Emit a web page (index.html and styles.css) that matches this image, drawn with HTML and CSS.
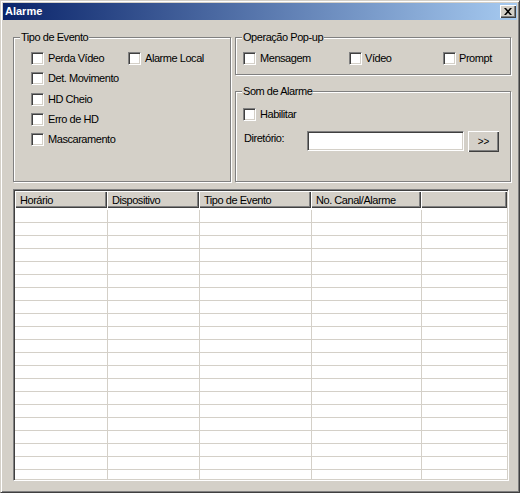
FILE: index.html
```html
<!DOCTYPE html>
<html lang="pt">
<head>
<meta charset="utf-8">
<title>Alarme</title>
<link rel="stylesheet" href="styles.css">
</head>
<body>
<div class="window">
  <div class="titlebar">
    <span class="title">Alarme</span>
    <span class="close-btn">
      <svg width="8" height="7" viewBox="0 0 8 7"><path d="M0 0h2l2 2.3 2-2.3h2l-3 3.5 3 3.5h-2l-2-2.3-2 2.3h-2l3-3.5z" fill="#000"/></svg>
    </span>
  </div>
  <div class="content">
    <div class="top">
      <div class="group g-tipo">
        <span class="legend">Tipo de Evento</span>
        <div class="tipo-cols">
          <div class="tipo-col c1">
            <label class="chk"><span class="box"></span><span class="txt">Perda Vídeo</span></label>
            <label class="chk"><span class="box"></span><span class="txt">Det. Movimento</span></label>
            <label class="chk"><span class="box"></span><span class="txt">HD Cheio</span></label>
            <label class="chk"><span class="box"></span><span class="txt">Erro de HD</span></label>
            <label class="chk"><span class="box"></span><span class="txt">Mascaramento</span></label>
          </div>
          <div class="tipo-col">
            <label class="chk"><span class="box"></span><span class="txt">Alarme Local</span></label>
          </div>
        </div>
      </div>
      <div class="right-col">
        <div class="group g-popup">
          <span class="legend">Operação Pop-up</span>
          <div class="popup-row">
            <label class="chk p1"><span class="box"></span><span class="txt">Mensagem</span></label>
            <label class="chk p2"><span class="box"></span><span class="txt">Vídeo</span></label>
            <label class="chk p3"><span class="box"></span><span class="txt">Prompt</span></label>
          </div>
        </div>
        <div class="group g-som">
          <span class="legend">Som de Alarme</span>
          <label class="chk"><span class="box"></span><span class="txt">Habilitar</span></label>
          <div class="dir-row">
            <span class="dir-label">Diretório:</span>
            <span class="input"></span>
            <span class="btn">&gt;&gt;</span>
          </div>
        </div>
      </div>
    </div>
    <div class="list">
      <div class="lv-header">
        <div class="hcell w1">Horário</div>
        <div class="hcell w2">Dispositivo</div>
        <div class="hcell w3">Tipo de Evento</div>
        <div class="hcell w4">No. Canal/Alarme</div>
        <div class="hcell w5"></div>
      </div>
      <div class="lv-body">
        <div class="row"><div class="cell w1"></div><div class="cell w2"></div><div class="cell w3"></div><div class="cell w4"></div><div class="cell w5"></div></div>
        <div class="row"><div class="cell w1"></div><div class="cell w2"></div><div class="cell w3"></div><div class="cell w4"></div><div class="cell w5"></div></div>
        <div class="row"><div class="cell w1"></div><div class="cell w2"></div><div class="cell w3"></div><div class="cell w4"></div><div class="cell w5"></div></div>
        <div class="row"><div class="cell w1"></div><div class="cell w2"></div><div class="cell w3"></div><div class="cell w4"></div><div class="cell w5"></div></div>
        <div class="row"><div class="cell w1"></div><div class="cell w2"></div><div class="cell w3"></div><div class="cell w4"></div><div class="cell w5"></div></div>
        <div class="row"><div class="cell w1"></div><div class="cell w2"></div><div class="cell w3"></div><div class="cell w4"></div><div class="cell w5"></div></div>
        <div class="row"><div class="cell w1"></div><div class="cell w2"></div><div class="cell w3"></div><div class="cell w4"></div><div class="cell w5"></div></div>
        <div class="row"><div class="cell w1"></div><div class="cell w2"></div><div class="cell w3"></div><div class="cell w4"></div><div class="cell w5"></div></div>
        <div class="row"><div class="cell w1"></div><div class="cell w2"></div><div class="cell w3"></div><div class="cell w4"></div><div class="cell w5"></div></div>
        <div class="row"><div class="cell w1"></div><div class="cell w2"></div><div class="cell w3"></div><div class="cell w4"></div><div class="cell w5"></div></div>
        <div class="row"><div class="cell w1"></div><div class="cell w2"></div><div class="cell w3"></div><div class="cell w4"></div><div class="cell w5"></div></div>
        <div class="row"><div class="cell w1"></div><div class="cell w2"></div><div class="cell w3"></div><div class="cell w4"></div><div class="cell w5"></div></div>
        <div class="row"><div class="cell w1"></div><div class="cell w2"></div><div class="cell w3"></div><div class="cell w4"></div><div class="cell w5"></div></div>
        <div class="row"><div class="cell w1"></div><div class="cell w2"></div><div class="cell w3"></div><div class="cell w4"></div><div class="cell w5"></div></div>
        <div class="row"><div class="cell w1"></div><div class="cell w2"></div><div class="cell w3"></div><div class="cell w4"></div><div class="cell w5"></div></div>
        <div class="row"><div class="cell w1"></div><div class="cell w2"></div><div class="cell w3"></div><div class="cell w4"></div><div class="cell w5"></div></div>
        <div class="row"><div class="cell w1"></div><div class="cell w2"></div><div class="cell w3"></div><div class="cell w4"></div><div class="cell w5"></div></div>
        <div class="row"><div class="cell w1"></div><div class="cell w2"></div><div class="cell w3"></div><div class="cell w4"></div><div class="cell w5"></div></div>
        <div class="row"><div class="cell w1"></div><div class="cell w2"></div><div class="cell w3"></div><div class="cell w4"></div><div class="cell w5"></div></div>
        <div class="row"><div class="cell w1"></div><div class="cell w2"></div><div class="cell w3"></div><div class="cell w4"></div><div class="cell w5"></div></div>
        <div class="row"><div class="cell w1"></div><div class="cell w2"></div><div class="cell w3"></div><div class="cell w4"></div><div class="cell w5"></div></div>
      </div>
    </div>
  </div>
</div>
</body>
</html>
```

FILE: styles.css
```css
* { box-sizing: border-box; }
html, body { margin: 0; padding: 0; }
body {
  width: 520px;
  height: 493px;
  overflow: hidden;
  background: #d4d0c8;
  font-family: "Liberation Sans", Arial, sans-serif;
  font-size: 11px;
  letter-spacing: -0.45px;
  color: #000;
}
.window {
  width: 520px;
  height: 493px;
  background: #d4d0c8;
  border: 1px solid;
  border-color: #d4d0c8 #404040 #404040 #d4d0c8;
  box-shadow: inset 1px 1px #fff, inset -1px -1px #808080;
  padding: 2px;
  display: flex;
  flex-direction: column;
}
.titlebar {
  height: 17px;
  flex: none;
  display: flex;
  align-items: center;
  padding-left: 2px;
  background: linear-gradient(to right, #0a246a, #a6caf0);
}
.title {
  color: #fff;
  font-weight: bold;
  letter-spacing: 0;
  line-height: 13px;
}
.close-btn {
  margin-left: auto;
  margin-right: 1px;
  width: 16px;
  height: 13px;
  background: #d4d0c8;
  box-shadow: inset 1px 1px #fff, inset -1px -1px #404040, inset -2px -2px #808080;
  display: flex;
  align-items: center;
  justify-content: center;
  padding-right: 1px;
}
.close-btn svg { display: block; }
.content {
  padding: 17px 0 0 10px;
}
.top {
  display: flex;
  gap: 4px;
  height: 145px;
}
.group {
  position: relative;
  border: 1px solid #808080;
  box-shadow: inset 1px 1px #fff, 1px 1px #fff;
}
.legend {
  position: absolute;
  top: -7px;
  left: 6px;
  padding: 0 1px;
  background: #d4d0c8;
  line-height: 13px;
  white-space: nowrap;
}
.g-tipo {
  width: 218px;
  height: 145px;
  padding: 14px 0 0 17px;
}
.tipo-cols { display: flex; }
.tipo-col {
  display: flex;
  flex-direction: column;
  gap: 7.25px;
}
.tipo-col.c1 { width: 97px; }
.chk {
  display: flex;
  align-items: center;
  gap: 4px;
  height: 13px;
  white-space: nowrap;
}
.box {
  flex: none;
  width: 13px;
  height: 13px;
  background: #fff;
  border: 1px solid;
  border-color: #808080 #fff #fff #808080;
  box-shadow: inset 1px 1px #404040, inset -1px -1px #d4d0c8;
}
.txt { line-height: 13px; }
.right-col {
  width: 276px;
  display: flex;
  flex-direction: column;
  gap: 16px;
}
.g-popup {
  height: 38px;
  padding: 14px 0 0 7px;
}
.popup-row { display: flex; }
.p1 { width: 106px; }
.p2 { width: 94px; }
.p2 .txt, .p3 .txt { margin-left: -1px; }
.g-som {
  height: 91px;
  padding: 16px 0 0 7px;
}
.dir-row {
  display: flex;
  align-items: flex-start;
  margin-top: 10px;
}
.dir-label {
  width: 64px;
  padding-left: 1px;
  line-height: 13px;
  margin-top: 1px;
}
.input {
  width: 157px;
  height: 20px;
  background: #fff;
  border: 1px solid;
  border-color: #808080 #fff #fff #808080;
  box-shadow: inset 1px 1px #404040, inset -1px -1px #d4d0c8;
}
.btn {
  margin-left: 4px;
  width: 31px;
  height: 21px;
  background: #d4d0c8;
  box-shadow: inset 1px 1px #fff, inset -1px -1px #404040, inset -2px -2px #808080;
  display: flex;
  align-items: center;
  justify-content: center;
  font-size: 10px;
  letter-spacing: 0;
  line-height: 13px;
}
.list {
  margin-top: 7px;
  width: 496px;
  height: 292px;
  background: #fff;
  border: 1px solid;
  border-color: #808080 #fff #fff #808080;
  box-shadow: inset 1px 1px #404040, inset -1px -1px #d4d0c8;
  padding: 1px;
  overflow: hidden;
  display: flex;
  flex-direction: column;
}
.lv-header {
  display: flex;
  height: 17px;
  flex: none;
}
.hcell {
  height: 17px;
  background: #d4d0c8;
  box-shadow: inset 1px 1px #fff, inset -1px -1px #404040, inset -2px -2px #808080;
  padding: 3px 0 0 5px;
  line-height: 13px;
  overflow: hidden;
  white-space: nowrap;
}
.w1 { width: 92px; flex: none; }
.w2 { width: 92px; flex: none; }
.w3 { width: 112px; flex: none; }
.w4 { width: 110px; flex: none; }
.w5 { flex: 1; }
.lv-body {
  padding-top: 2px;
  overflow: hidden;
}
.row {
  display: flex;
  height: 13px;
  border-bottom: 1px solid #d4d0c8;
}
.cell { height: 12px; }
.cell + .cell { border-left: 1px solid #d4d0c8; }
.row .w2 { width: 92px; }
```
